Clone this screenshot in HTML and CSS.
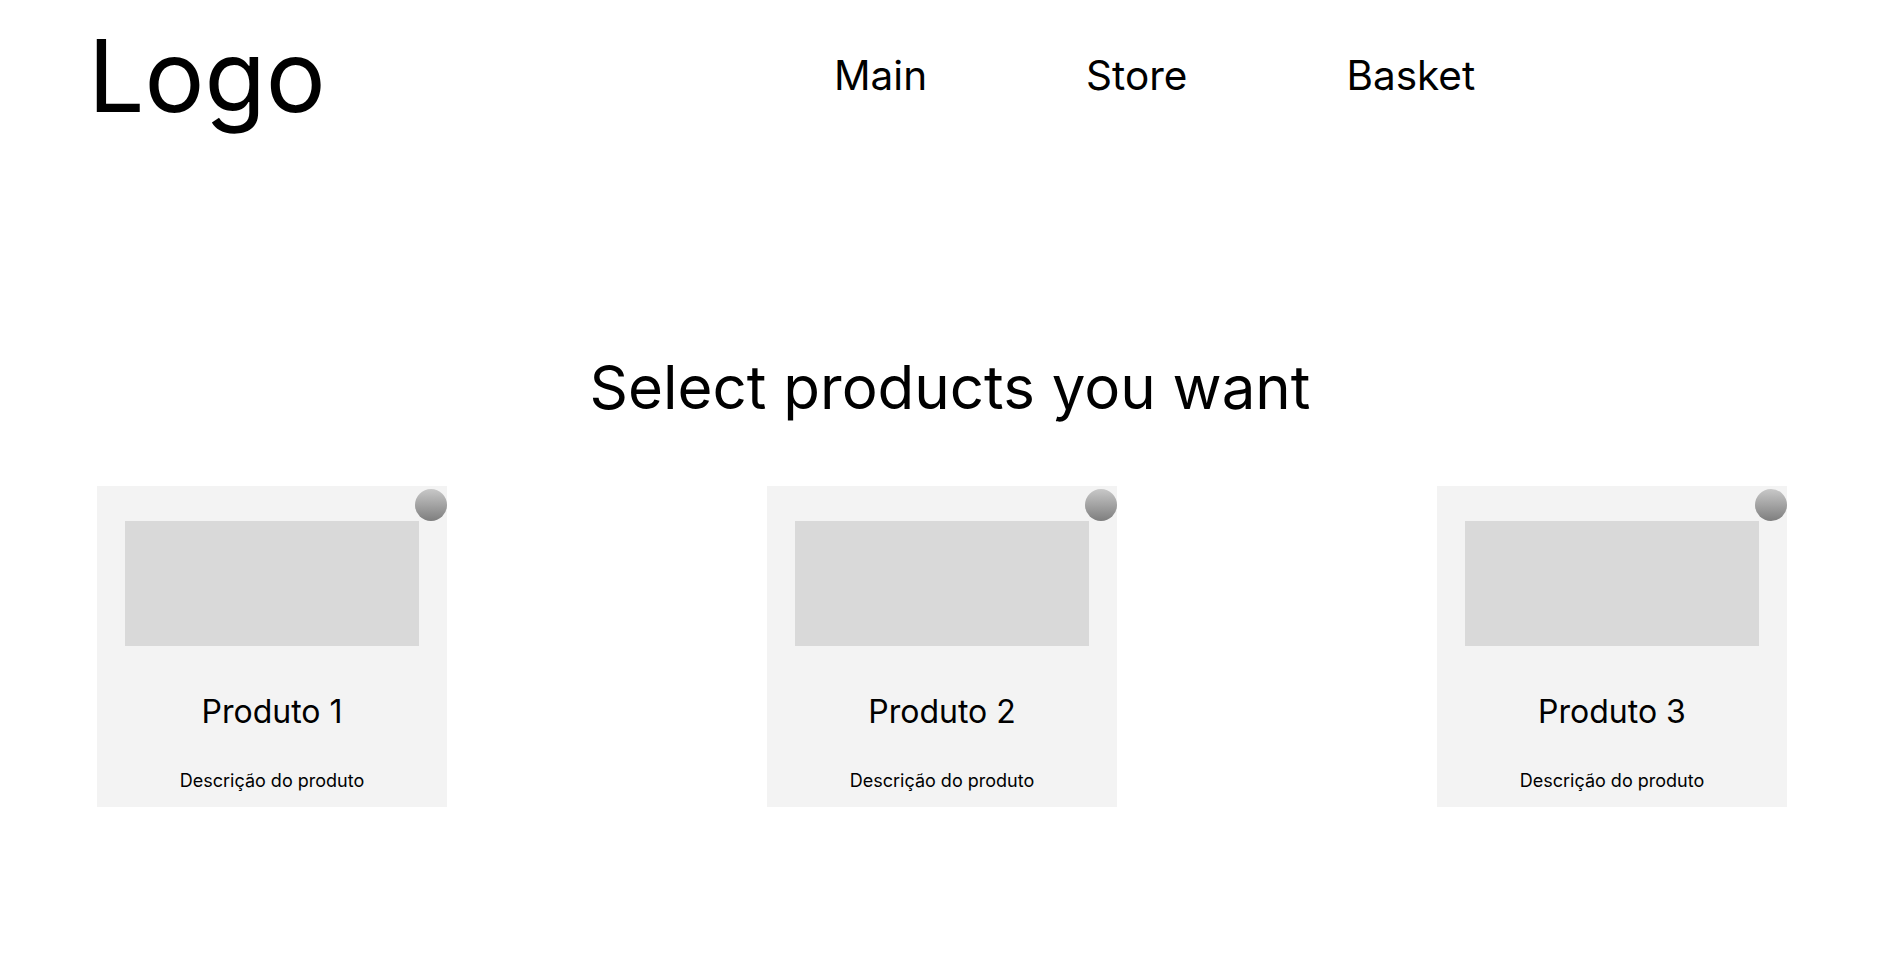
FILE: index.html
```html
<!DOCTYPE html>
<html lang="pt">
<head>
<meta charset="utf-8">
<title>Store</title>
<link rel="stylesheet" href="styles.css">
</head>
<body>
<header class="header">
  <div class="logo">Logo</div>
  <nav class="nav">
    <a class="nav-link" href="#">Main</a>
    <a class="nav-link" href="#">Store</a>
    <a class="nav-link" href="#">Basket</a>
  </nav>
</header>
<main class="content">
  <h1 class="title">Select products you want</h1>
  <section class="products">
    <article class="card">
      <span class="select-dot"></span>
      <div class="card-image"></div>
      <h2 class="card-name">Produto 1</h2>
      <p class="card-desc">Descrição do produto</p>
    </article>
    <article class="card">
      <span class="select-dot"></span>
      <div class="card-image"></div>
      <h2 class="card-name">Produto 2</h2>
      <p class="card-desc">Descrição do produto</p>
    </article>
    <article class="card">
      <span class="select-dot"></span>
      <div class="card-image"></div>
      <h2 class="card-name">Produto 3</h2>
      <p class="card-desc">Descrição do produto</p>
    </article>
  </section>
</main>
</body>
</html>
```

FILE: styles.css
```css
* {
  box-sizing: border-box;
}

html, body {
  margin: 0;
  padding: 0;
  background: #ffffff;
  color: #000000;
  font-family: "Inter", "Noto Sans", sans-serif;
}

.header {
  display: flex;
  align-items: center;
  padding: 15px 0 0 88px;
}

.logo {
  font-size: 100px;
  line-height: 121px;
  font-weight: 400;
  width: 746px;
}

.nav {
  display: flex;
  align-items: center;
  gap: 159px;
}

.nav-link {
  font-size: 40.5px;
  line-height: 48px;
  color: #000000;
  text-decoration: none;
}

.content {
  padding-top: 215px;
}

.title {
  margin: 0;
  text-align: center;
  font-size: 60px;
  line-height: 73px;
  font-weight: 400;
}

.products {
  display: flex;
  justify-content: space-between;
  padding: 62px 113px 0 97px;
}

.card {
  position: relative;
  width: 350px;
  height: 321px;
  background: #f3f3f3;
  padding: 35px 28px 0;
  display: flex;
  flex-direction: column;
  align-items: center;
}

.select-dot {
  position: absolute;
  top: 3px;
  right: 0;
  width: 32px;
  height: 32px;
  border-radius: 50%;
  background: linear-gradient(180deg, #c8c8c8 0%, #7e7e7e 100%);
}

.card-image {
  width: 294px;
  height: 125px;
  background: #d9d9d9;
}

.card-name {
  margin: 48px 0 0;
  font-size: 32px;
  line-height: 36px;
  font-weight: 400;
}

.card-desc {
  margin: 40px 0 0;
  font-size: 18px;
  line-height: 22px;
}
```
